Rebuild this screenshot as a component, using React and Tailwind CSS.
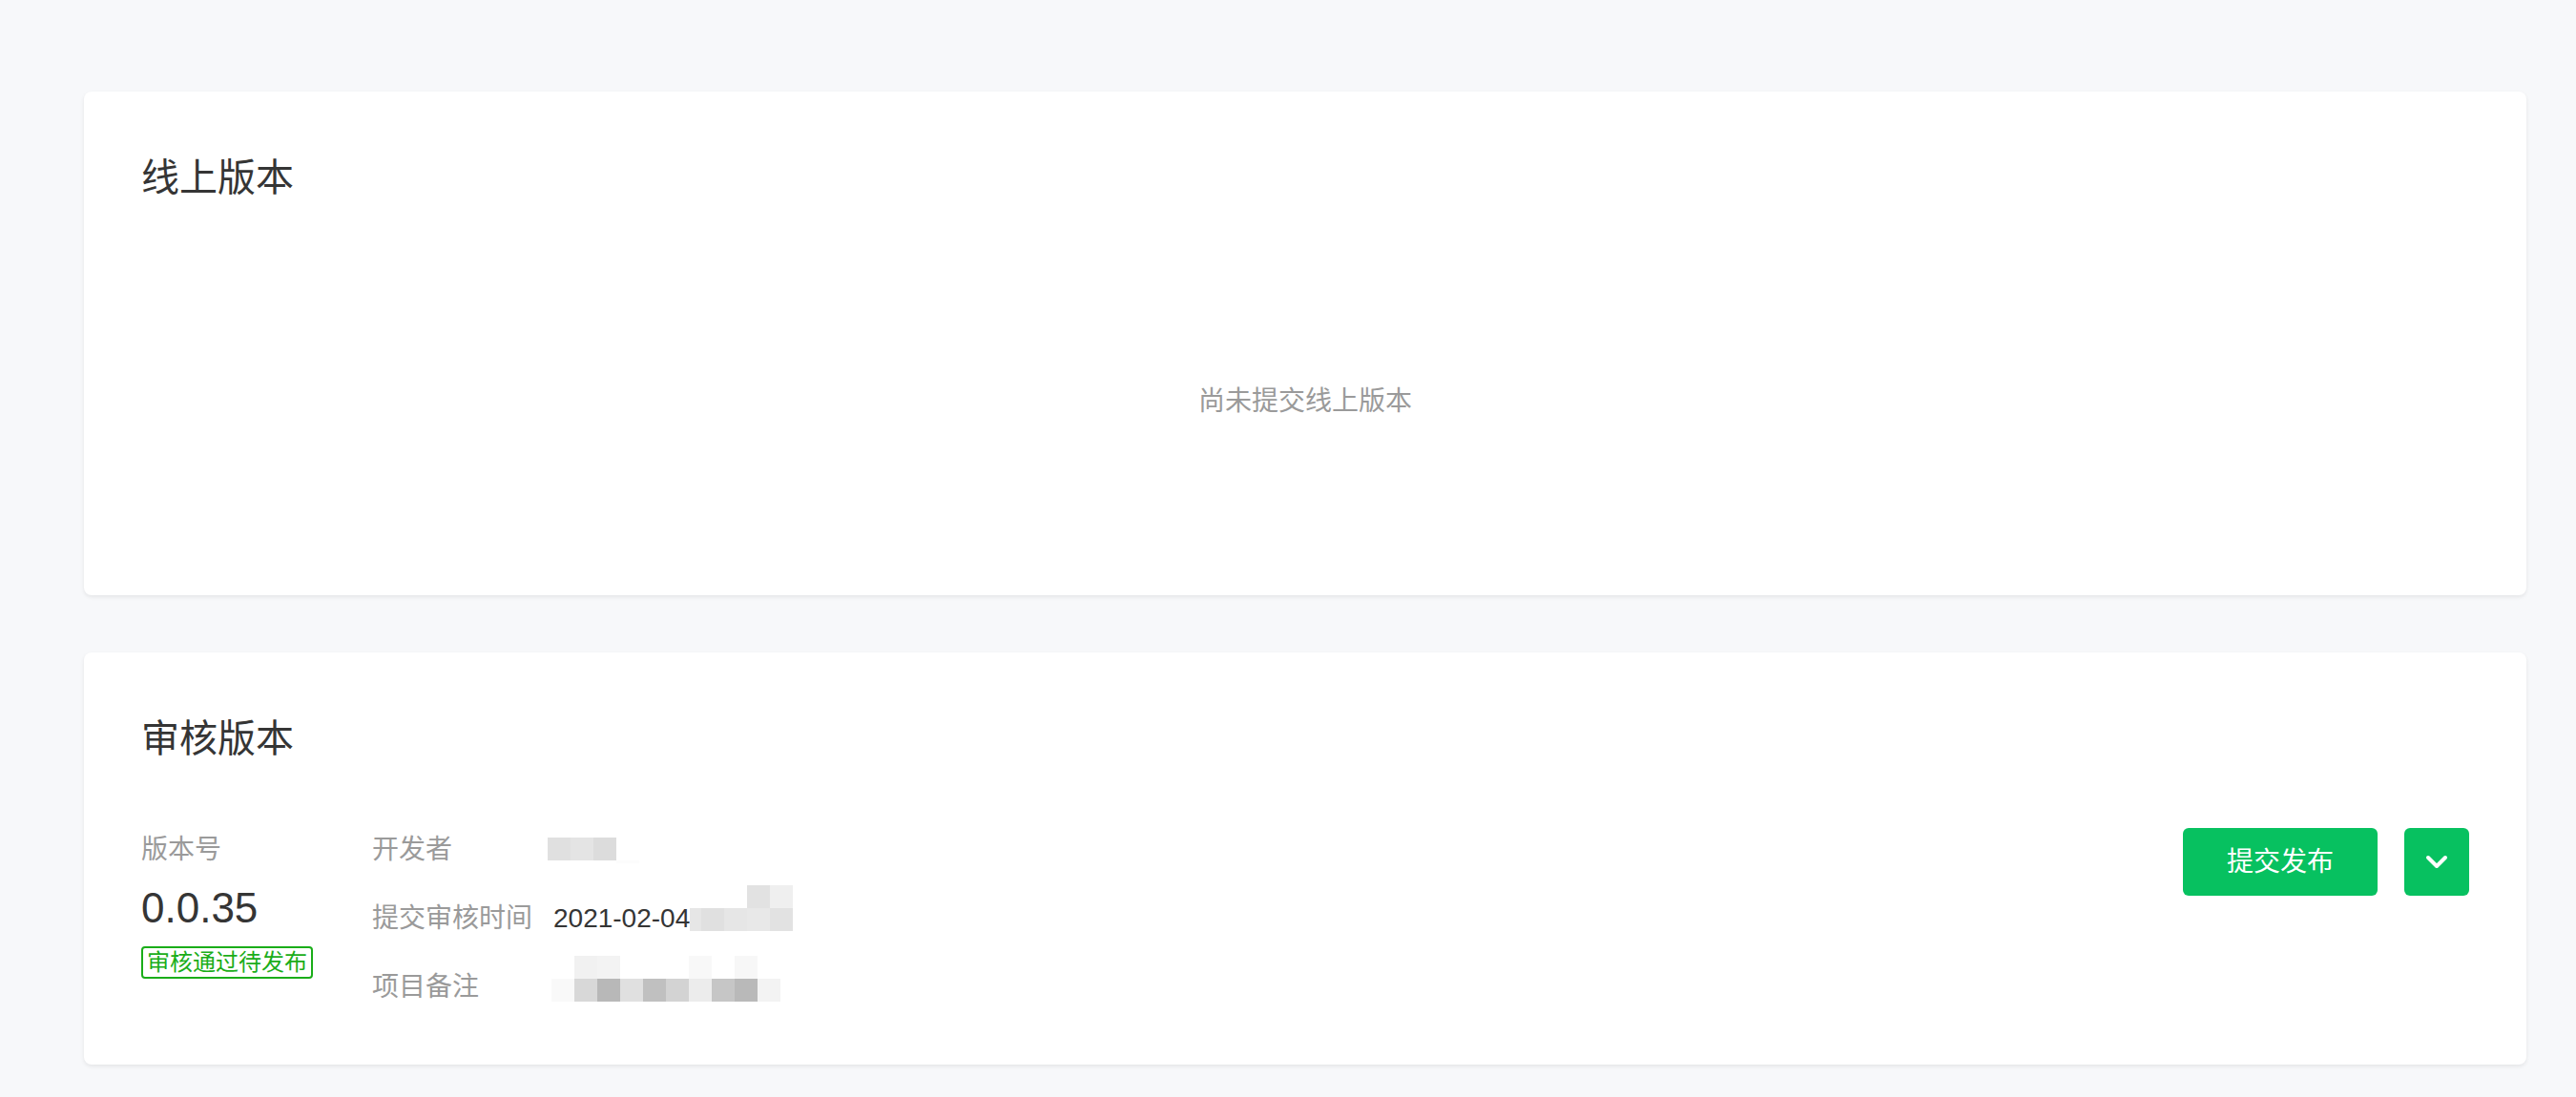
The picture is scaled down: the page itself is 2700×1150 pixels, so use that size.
const font = "font-['Liberation_Sans','Noto_Sans_CJK_SC',sans-serif]";

// mosaic rows standing in for the blurred fields
const devBlur = ["bg-[#e0e0e0]", "bg-[#e4e4e4]", "bg-[#dcdcdc]"];
const dateBlurTop = ["bg-white", "bg-white", "bg-[#e2e2e2]", "bg-[#efefef]"];
const dateBlurBottom = [
  "bg-[#e0e0e0]",
  "bg-[#e6e6e6]",
  "bg-[#e8e8e8]",
  "bg-[#e2e2e2]",
];
const noteTop = [
  "bg-white",
  "bg-[#f1f1f1]",
  "bg-[#f3f3f3]",
  "bg-white",
  "bg-white",
  "bg-white",
  "bg-[#f8f8f8]",
  "bg-white",
  "bg-[#f7f7f7]",
  "bg-white",
];
const noteBottom = [
  "bg-[#f9f9f9]",
  "bg-[#d8d8d8]",
  "bg-[#b8b8b8]",
  "bg-[#e0e0e0]",
  "bg-[#c0c0c0]",
  "bg-[#d3d3d3]",
  "bg-[#ececec]",
  "bg-[#c6c6c6]",
  "bg-[#b9b9b9]",
  "bg-[#f3f3f3]",
];

function Cells({ colors }) {
  return (
    <div className="flex">
      {colors.map((c, i) => (
        <div key={i} className={`w-[24px] h-[24px] ${c}`} />
      ))}
    </div>
  );
}

function Card({ title, children, height }) {
  return (
    <div
      className={`bg-white rounded-[8px] shadow-[0_2px_4px_rgba(0,0,0,0.08)] px-[60px] pt-[62px] ${height}`}
    >
      <h2 className="text-[40px] leading-[56px] text-[#353535] font-normal">
        {title}
      </h2>
      {children}
    </div>
  );
}

function InfoRow({ label, children }) {
  return (
    <div className="flex items-center h-[40px]">
      <div className="w-[190px] text-[28px] leading-[40px] text-[#9a9a9a]">
        {label}
      </div>
      <div className="flex items-center">{children}</div>
    </div>
  );
}

export default function App() {
  return (
    <div className={`min-h-[1150px] bg-[#f7f8fa] pl-[88px] pt-[96px] ${font}`}>
      <div className="w-[2560px] flex flex-col gap-[60px]">
        {/* Online version */}
        <Card title="线上版本" height="h-[528px]">
          <div className="mt-[187px] text-center text-[28px] leading-[40px] text-[#9a9a9a]">
            尚未提交线上版本
          </div>
        </Card>

        {/* Review version */}
        <Card title="审核版本" height="h-[432px]">
          <div className="mt-[66px] flex items-start">
            <div className="w-[242px] pt-[3px]">
              <div className="text-[28px] leading-[40px] text-[#9a9a9a]">
                版本号
              </div>
              <div className="mt-[13px] text-[44px] leading-[56px] text-[#353535]">
                0.0.35
              </div>
              <div className="mt-[12px] inline-block border-2 border-[#1aad19] rounded-[4px] px-[4px] text-[24px] leading-[30px] text-[#1aad19]">
                审核通过待发布
              </div>
            </div>

            <div className="flex-1 pt-[3px] flex flex-col gap-[32px]">
              <InfoRow label="开发者">
                <div className="flex flex-col -ml-[6px]">
                  <Cells colors={devBlur} />
                  <div className="ml-[72px] w-[24px] h-[3px] bg-[#fcfcfc]" />
                </div>
              </InfoRow>
              <InfoRow label="提交审核时间">
                <span className="text-[28px] leading-[40px] text-[#353535]">
                  2021-02-04
                </span>
                <div className="flex flex-col -mt-[22px]">
                  <div className="flex">
                    <div className="w-[12px]" />
                    <Cells colors={dateBlurTop} />
                  </div>
                  <div className="flex">
                    <div className="w-[12px] h-[24px] bg-[#e6e6e6]" />
                    <Cells colors={dateBlurBottom} />
                  </div>
                </div>
              </InfoRow>
              <InfoRow label="项目备注">
                <div className="flex flex-col -ml-[2px] -mt-[18px]">
                  <Cells colors={noteTop} />
                  <Cells colors={noteBottom} />
                </div>
              </InfoRow>
            </div>

            <div className="flex items-center gap-[28px]">
              <button className="w-[204px] h-[71px] rounded-[6px] bg-[#07c160] text-white text-[28px]">
                提交发布
              </button>
              <button className="w-[68px] h-[71px] rounded-[6px] bg-[#07c160] flex items-center justify-center">
                <svg width="24" height="16" viewBox="0 0 24 16" fill="none">
                  <polyline
                    points="3,3 12,12 21,3"
                    stroke="white"
                    strokeWidth="4"
                    strokeLinecap="round"
                    strokeLinejoin="round"
                  />
                </svg>
              </button>
            </div>
          </div>
        </Card>
      </div>
    </div>
  );
}
